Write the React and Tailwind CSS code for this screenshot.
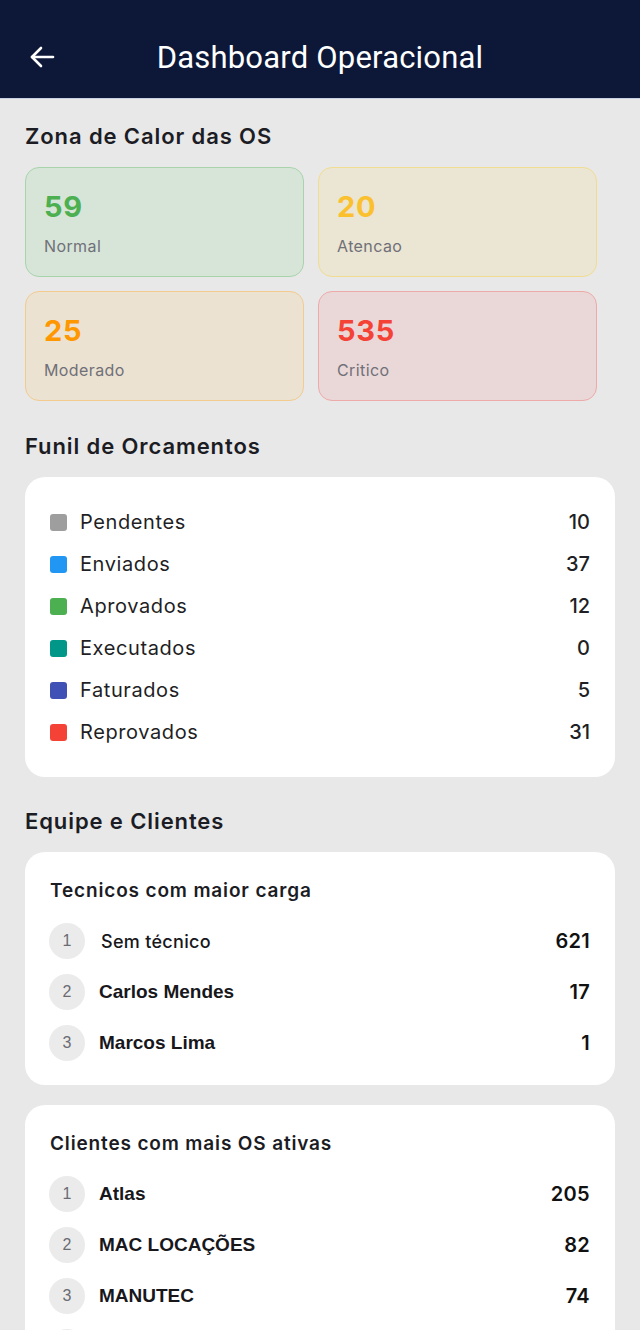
import React from "react";

const heat = [
  { n: "59", l: "Normal", bg: "bg-[#d7e5d9]", bd: "border-[#a8d4ab]", c: "text-[#4caf50]" },
  { n: "20", l: "Atencao", bg: "bg-[#ebe5d3]", bd: "border-[#f1dd92]", c: "text-[#fbc02d]" },
  { n: "25", l: "Moderado", bg: "bg-[#ebe2d2]", bd: "border-[#f3cb8f]", c: "text-[#ff9800]" },
  { n: "535", l: "Critico", bg: "bg-[#ead7d7]", bd: "border-[#eeaaa8]", c: "text-[#f44336]" },
];

const funnel = [
  { l: "Pendentes", v: 10, c: "bg-[#9e9e9e]" },
  { l: "Enviados", v: 37, c: "bg-[#2196f3]" },
  { l: "Aprovados", v: 12, c: "bg-[#4caf50]" },
  { l: "Executados", v: 0, c: "bg-[#009688]" },
  { l: "Faturados", v: 5, c: "bg-[#3f51b5]" },
  { l: "Reprovados", v: 31, c: "bg-[#f44336]" },
];

const inter = { fontFamily: "Inter, 'Noto Sans', sans-serif" };
const arial = { fontFamily: "'Liberation Sans', Arial, sans-serif" };

function RankCard({ title, items }) {
  return (
    <div className="bg-white rounded-[20px] pt-[27px] pb-[24px] pl-[24px] pr-[25px]">
      <div className="ml-[1px] text-[19px] leading-[24px] font-semibold text-[#1c1c24] tracking-[0.85px]" style={inter}>
        {title}
      </div>
      <div className="mt-[20px] flex flex-col gap-[15px]">
        {items.map((it, i) => (
          <div key={i} className="flex items-center h-[36px]">
            <div
              className="w-[36px] h-[36px] rounded-full bg-[#ebebeb] flex items-center justify-center text-[16px] text-[#6b6b72]"
              style={arial}
            >
              {i + 1}
            </div>
            {it.soft ? (
              <div className="ml-[16px] flex-1 text-[18px] font-medium text-[#17171c] tracking-[0.3px]" style={inter}>
                {it.name}
              </div>
            ) : (
              <div className="ml-[14px] flex-1 text-[19px] font-bold text-[#17171c]" style={arial}>
                {it.name}
              </div>
            )}
            <div className="text-[20px] font-semibold text-[#111] tracking-[0.3px]" style={inter}>
              {it.v}
            </div>
          </div>
        ))}
      </div>
    </div>
  );
}

export default function App() {
  return (
    <div className="w-[640px] min-h-[1330px] bg-[#e8e8e8]" style={inter}>
      <div className="h-[99px] bg-[#0d1838] border-b border-[#c8d0e2] flex items-center relative">
        <svg
          className="absolute left-[29px] top-[45px]"
          width="26"
          height="24"
          viewBox="0 0 26 24"
          fill="none"
          stroke="white"
          strokeWidth="2.6"
          strokeLinecap="round"
          strokeLinejoin="round"
        >
          <path d="M24 12H3" />
          <path d="M12 3L3 12L12 21" />
        </svg>
        <div
          className="w-full text-center text-white text-[31px] leading-[36px] mt-[17px] tracking-[0.2px]"
          style={{ fontFamily: "Roboto, 'Noto Sans', sans-serif", fontWeight: 400 }}
        >
          Dashboard Operacional
        </div>
      </div>

      <div className="px-[25px] pt-[23px] pb-[40px]">
        <h2 className="text-[22px] leading-[28px] font-semibold text-[#1c1c24] tracking-[0.9px]">Zona de Calor das OS</h2>
        <div className="mt-[17px] w-[572px] grid grid-cols-2 gap-[14px]">
          {heat.map((h) => (
            <div key={h.l} className={`h-[110px] rounded-[14px] border ${h.bg} ${h.bd} pl-[18px] pt-[22px]`}>
              <div className={`text-[29px] leading-[34px] font-bold tracking-[0.8px] ${h.c}`}>{h.n}</div>
              <div className="mt-[12px] text-[16px] leading-[20px] text-[#707078] tracking-[0.4px]">{h.l}</div>
            </div>
          ))}
        </div>

        <h2 className="mt-[31px] text-[22px] leading-[28px] font-semibold text-[#1c1c24] tracking-[0.9px]">Funil de Orcamentos</h2>
        <div className="mt-[17px] bg-white rounded-[20px] py-[24px] pl-[25px] pr-[25px]">
          {funnel.map((f) => (
            <div key={f.l} className="h-[42px] flex items-center">
              <div className={`w-[17px] h-[17px] rounded-[3px] ${f.c}`} />
              <div className="ml-[13px] flex-1 text-[20px] text-[#1f1f26] tracking-[0.6px]">{f.l}</div>
              <div className="text-[20px] font-medium text-[#1f1f26]">{f.v}</div>
            </div>
          ))}
        </div>

        <h2 className="mt-[30px] text-[22px] leading-[28px] font-semibold text-[#1c1c24] tracking-[0.9px]">Equipe e Clientes</h2>
        <div className="mt-[17px] flex flex-col gap-[20px]">
          <RankCard
            title="Tecnicos com maior carga"
            items={[
              { name: "Sem técnico", v: 621, soft: true },
              { name: "Carlos Mendes", v: 17 },
              { name: "Marcos Lima", v: 1 },
            ]}
          />
          <RankCard
            title="Clientes com mais OS ativas"
            items={[
              { name: "Atlas", v: 205 },
              { name: "MAC LOCAÇÕES", v: 82 },
              { name: "MANUTEC", v: 74 },
              { name: "TRANSLOG", v: 41 },
              { name: "Construtora Alfa", v: 29 },
            ]}
          />
        </div>
      </div>
    </div>
  );
}
